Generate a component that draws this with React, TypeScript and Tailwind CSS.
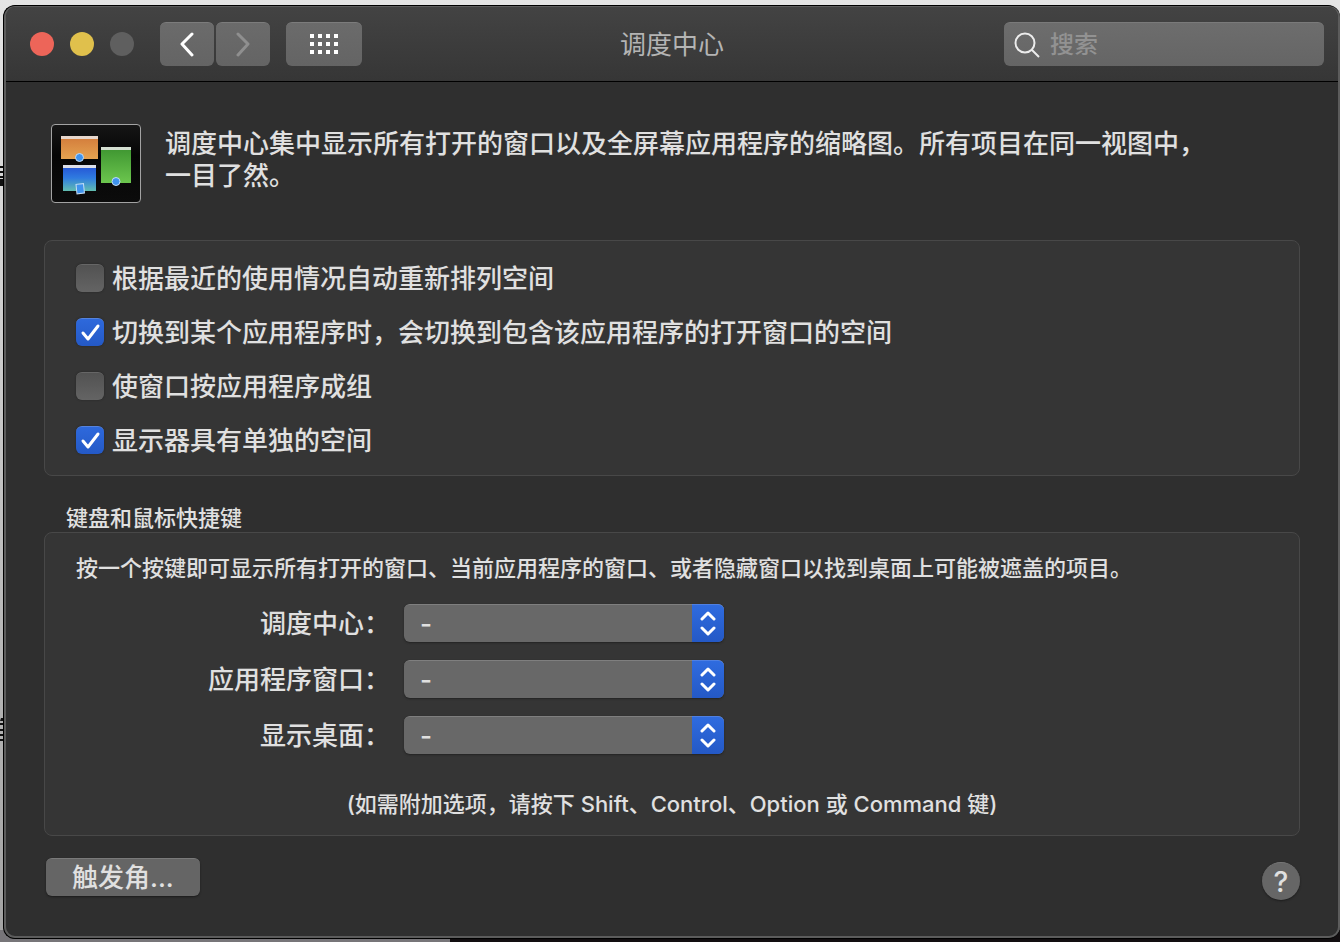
import { useState } from "react";

const SPACE_OPTIONS = [
  { id: "auto-rearrange", label: "根据最近的使用情况自动重新排列空间", checked: false },
  { id: "switch-space", label: "切换到某个应用程序时，会切换到包含该应用程序的打开窗口的空间", checked: true },
  { id: "group-windows", label: "使窗口按应用程序成组", checked: false },
  { id: "separate-spaces", label: "显示器具有单独的空间", checked: true },
];

const SHORTCUTS = [
  { id: "mission-control", label: "调度中心：" },
  { id: "app-windows", label: "应用程序窗口：" },
  { id: "show-desktop", label: "显示桌面：" },
];

function MissionControlIcon() {
  return (
    <svg width="90" height="80" viewBox="0 0 90 80" className="shrink-0" aria-hidden="true">
      <defs>
        <linearGradient id="bg" x1="0" y1="0" x2="0" y2="1">
          <stop offset="0" stopColor="#161616" />
          <stop offset="0.4" stopColor="#050505" />
          <stop offset="1" stopColor="#0c0c0c" />
        </linearGradient>
        <linearGradient id="orange" x1="0" y1="0" x2="0" y2="1">
          <stop offset="0" stopColor="#d27a3a" />
          <stop offset="1" stopColor="#e5a351" />
        </linearGradient>
        <linearGradient id="blue" x1="0" y1="0" x2="0" y2="1">
          <stop offset="0" stopColor="#2450d4" />
          <stop offset="0.5" stopColor="#2f7be0" />
          <stop offset="1" stopColor="#62bdb0" />
        </linearGradient>
        <linearGradient id="green" x1="0" y1="0" x2="0" y2="1">
          <stop offset="0" stopColor="#3d9430" />
          <stop offset="1" stopColor="#6cc64e" />
        </linearGradient>
      </defs>
      <rect x="0.5" y="0.5" width="89" height="78" rx="3.5" fill="url(#bg)" stroke="#a3a3a3" />
      <rect x="10" y="12" width="37" height="23" fill="url(#orange)" />
      <rect x="10" y="12" width="37" height="3" fill="#e6d6cc" />
      <rect x="12" y="41" width="33" height="26" fill="url(#blue)" />
      <rect x="12" y="41" width="33" height="3" fill="#dcdfe8" />
      <rect x="50" y="23" width="30" height="36" fill="url(#green)" />
      <rect x="50" y="23" width="30" height="3" fill="#d5e0d2" />
      <circle cx="28.500" cy="33.500" r="4" fill="#3f93ee" stroke="#c3ddf5" />
      <circle cx="65" cy="57.500" r="4" fill="#3f93ee" stroke="#c3ddf5" />
      <rect x="25.500" y="60" width="7.500" height="9.500" fill="#3f93ee" stroke="#c3ddf5" transform="rotate(-6 29 65)" />
    </svg>
  );
}

function Toolbar() {
  const buttonStyle =
    "flex h-11 items-center justify-center rounded-md border-t border-[#7c7c7c] bg-linear-to-b from-[#6b6b6b] to-[#646464]";

  return (
    <header className="flex items-center border-b border-black bg-linear-to-b from-[#434343] to-[#363636] px-[14px] py-[15px]">
      <div className="flex flex-1 items-center">
        <div className="ml-2.5 flex gap-4">
          <button aria-label="关闭" className="size-6 rounded-full bg-[#ed6559]"></button>
          <button aria-label="最小化" className="size-6 rounded-full bg-[#e0c04c]"></button>
          <button aria-label="缩放" disabled className="size-6 rounded-full bg-[#5f5f5f]"></button>
        </div>
        <div className="ml-[26px] flex gap-0.5">
          <button aria-label="后退" className={`${buttonStyle} w-[54px]`}>
            <svg width="16" height="26" viewBox="0 0 16 26" fill="none" stroke="#fff" strokeWidth="3" strokeLinecap="round" strokeLinejoin="round">
              <path d="M13 2 3 12l10 11" />
            </svg>
          </button>
          <button aria-label="前进" disabled className={`${buttonStyle} w-[54px]`}>
            <svg width="16" height="26" viewBox="0 0 16 26" fill="none" stroke="#8f8f8f" strokeWidth="3" strokeLinecap="round" strokeLinejoin="round">
              <path d="m3 2 10 10L3 23" />
            </svg>
          </button>
        </div>
        <button aria-label="显示全部" className={`${buttonStyle} ml-4 w-[76px]`}>
          <svg width="28" height="22" viewBox="0 0 28 22" fill="#fff">
            {[0, 8, 16].map((y) => [0, 8, 16, 24].map((x) => <rect key={`${x}-${y}`} x={x} y={y} width="4" height="4" />))}
          </svg>
        </button>
      </div>
      <h1 className="pt-0.5 text-[26px] leading-8 font-normal text-[#b4b4b4]">调度中心</h1>
      <div className="flex flex-1 justify-end">
        <label className="flex h-11 w-[320px] items-center gap-2.5 rounded-md border-t border-[#7a7a7a] bg-linear-to-b from-[#6d6d6d] to-[#656565] px-2.5">
          <svg width="26" height="26" viewBox="0 0 26 26" fill="none" stroke="#ececec" strokeWidth="2" className="shrink-0">
            <circle cx="11" cy="11" r="9.500" />
            <path d="m18 18 7 7" />
          </svg>
          <input
            type="search"
            aria-label="搜索"
            placeholder="搜索"
            className="min-w-0 flex-1 bg-transparent text-2xl leading-8 text-[#e4e4e4] outline-none placeholder:text-[#929292]"
          />
        </label>
      </div>
    </header>
  );
}

function Checkbox({ id, label, defaultChecked }: { id: string; label: string; defaultChecked: boolean }) {
  return (
    <div className="flex h-7 items-center gap-2">
      <span className="relative size-7 shrink-0">
        <input
          id={id}
          type="checkbox"
          defaultChecked={defaultChecked}
          className="peer block size-7 appearance-none rounded-md border-t border-[#666666] bg-linear-to-b from-[#525252] to-[#646464] shadow-[0_0_2px_#222] checked:border-[#5583de] checked:from-[#2e69dc] checked:to-[#2459c6]"
        />
        <svg
          viewBox="0 0 28 28"
          fill="none"
          stroke="#fff"
          strokeWidth="3"
          strokeLinecap="round"
          strokeLinejoin="round"
          className="pointer-events-none absolute inset-0 hidden peer-checked:block"
        >
          <path d="m7 15 5 6 10-13" />
        </svg>
      </span>
      <label htmlFor={id} className="pt-0.5 text-[26px] leading-8">
        {label}
      </label>
    </div>
  );
}

function ShortcutSelect({ id, label }: { id: string; label: string }) {
  const [value, setValue] = useState("-");

  return (
    <>
      <label htmlFor={id} className="pt-0.5 text-right text-[26px] leading-8">
        {label}
      </label>
      <div className="relative w-80">
        <select
          id={id}
          value={value}
          onChange={(e) => setValue(e.target.value)}
          className="block h-[38px] w-full appearance-none rounded-md border-t border-[#7f7f7f] bg-[#686868] px-4 text-[26px] leading-8 shadow-[0_1px_2px_#222] outline-none"
        >
          <option value="-">-</option>
        </select>
        <span className="pointer-events-none absolute inset-y-0 right-0 flex w-8 items-center justify-center rounded-r-md border-t border-[#4f80e2] bg-linear-to-b from-[#2f6bdf] to-[#2459c6]">
          <svg width="18" height="26" viewBox="0 0 18 26" fill="none" stroke="#fff" strokeWidth="3" strokeLinecap="round" strokeLinejoin="round">
            <path d="m3 8 6-6 6 6M3 17l6 6 6-6" />
          </svg>
        </span>
      </div>
    </>
  );
}

export default function App() {
  return (
    <div className="relative flex min-h-screen flex-col pt-[5px] pb-[3px] pl-[3px] font-['Inter','Noto_Sans_CJK_SC',sans-serif] font-medium text-[#e0e0e0] [background:linear-gradient(90deg,#777579_450px,#120e10_450px)_bottom/100%_12px_no-repeat,linear-gradient(180deg,#e4e4e4,#a2a2a2)]">
      {/* edges of the window behind */}
      <svg width="3" height="600" viewBox="0 0 3 600" fill="#111" aria-hidden="true" className="absolute top-[160px] left-0">
        <path d="M0 6h3v2H0zM0 11h3v2H0zM0 16h3v2H0zM0 19h3v7H0zM1 558h2v3H0zM0 563h3v2H0zM0 569h3v2H0zM0 574h3v2H0zM0 579h3v2H0z" />
      </svg>
      <div className="flex flex-1 flex-col overflow-hidden rounded-xl border border-r-0 border-black bg-[#2f2f2f]">
        <div className="flex flex-1 flex-col overflow-hidden rounded-[11px] border-2 border-t border-[#5c5c5c]">
          <Toolbar />
          <main className="flex-1 px-[38px] pt-[42px] pb-9">
            <div className="flex items-start gap-6 pl-[7px]">
              <MissionControlIcon />
              <p className="max-w-[1060px] pt-1 text-[26px] leading-8">
                调度中心集中显示所有打开的窗口以及全屏幕应用程序的缩略图。所有项目在同一视图中，一目了然。
              </p>
            </div>

            <section className="mt-9 flex flex-col gap-[26px] rounded-lg border border-[#484848] bg-[#353535] px-[31px] pt-[23px] pb-[21px]">
              {SPACE_OPTIONS.map((option) => (
                <Checkbox key={option.id} id={option.id} label={option.label} defaultChecked={option.checked} />
              ))}
            </section>

            <h2 className="mt-7 pl-[22px] text-[22px] leading-7">键盘和鼠标快捷键</h2>
            <section className="rounded-lg border border-[#484848] bg-[#353535] px-[31px] pt-[21px] pb-[17px]">
              <p className="text-[22px] leading-7">
                按一个按键即可显示所有打开的窗口、当前应用程序的窗口、或者隐藏窗口以找到桌面上可能被遮盖的项目。
              </p>
              <div className="mt-[22px] grid grid-cols-[314px_320px] items-center gap-x-[14px] gap-y-[18px]">
                {SHORTCUTS.map((shortcut) => (
                  <ShortcutSelect key={shortcut.id} id={shortcut.id} label={shortcut.label} />
                ))}
              </div>
              <p className="mt-9 text-center text-[22px] leading-7">
                (如需附加选项，请按下 Shift、Control、Option 或 Command 键)
              </p>
            </section>

            <div className="mt-[22px] flex items-start justify-between pl-0.5">
              <button className="h-[38px] rounded-md border-t border-[#7a7a7a] bg-[#656565] px-[26px] text-[26px] leading-8 shadow-[0_1px_2px_#1c1c1c]">
                触发角...
              </button>
              <button
                aria-label="帮助"
                className="mt-1 size-[38px] rounded-full border-t border-[#777777] bg-[#666666] text-[28px] leading-8 shadow-[0_1px_2px_#1c1c1c]"
              >
                ?
              </button>
            </div>
          </main>
        </div>
      </div>
    </div>
  );
}
